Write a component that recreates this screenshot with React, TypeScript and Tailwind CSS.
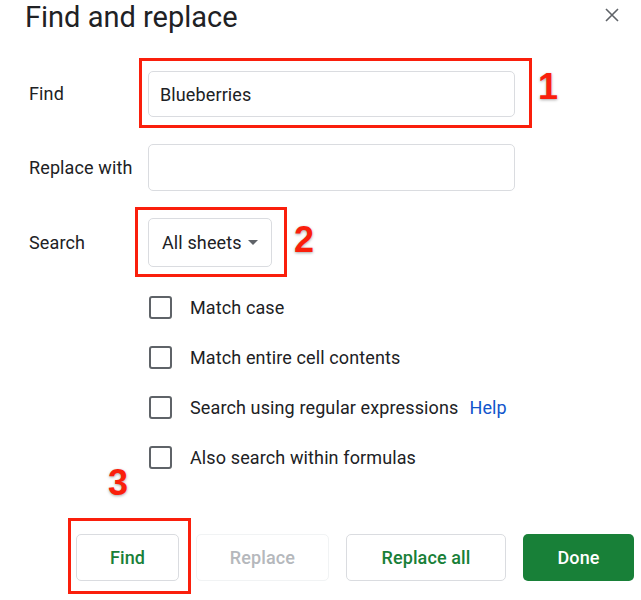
import React from 'react'

const OPTIONS = [
  'Match case',
  'Match entire cell contents',
  'Search using regular expressions',
  'Also search within formulas',
]

// red hand-drawn annotation box
function RedBox({ className }: { className: string }) {
  return <div className={`absolute border-[3px] border-[#fa1f0c] pointer-events-none ${className}`} />
}

function Num({ n, className }: { n: string; className: string }) {
  return (
    <span
      className={`absolute font-['Liberation_Sans',Arial,sans-serif] font-bold text-[36px] leading-none text-[#fa1f0c] [-webkit-text-stroke:5px_white] [paint-order:stroke_fill] [text-shadow:0_1px_3px_rgba(0,0,0,0.35)] ${className}`}
    >
      {n}
    </span>
  )
}

export default function App() {
  return (
    <div className="relative w-[641px] h-[600px] overflow-hidden bg-white font-['Roboto','Noto_Sans',sans-serif] text-[#202124] tracking-[0.12px]">
      {/* Header */}
      <div className="flex items-start justify-between h-[34px] pl-[25px] pr-[22px]">
        <h1 className="text-[29px] leading-[34px] font-normal tracking-normal">Find and replace</h1>
        <svg className="mt-[8px]" width="14" height="14" viewBox="0 0 14 14" fill="none">
          <path d="M1 1L13 13M13 1L1 13" stroke="#5f6368" strokeWidth="1.6" />
        </svg>
      </div>

      {/* Fields */}
      <div className="flex flex-col pl-[29px] mt-[37px]">
        <div className="flex items-center h-[46px]">
          <div className="w-[119px] text-[18px] leading-6">Find</div>
          <div className="w-[367px] h-[46px] flex items-center pl-[11px] border border-[#dadce0] rounded-[5px] text-[18px]">
            Blueberries
          </div>
        </div>
        <div className="flex items-center h-[47px] mt-[27px]">
          <div className="w-[119px] text-[18px] leading-6">Replace with</div>
          <div className="w-[367px] h-[47px] border border-[#dadce0] rounded-[5px]" />
        </div>
        <div className="flex items-center h-[49px] mt-[27px]">
          <div className="w-[119px] text-[18px] leading-6">Search</div>
          <div className="w-[124px] h-[49px] flex items-center justify-between pl-[13px] pr-[13px] border border-[#dadce0] rounded-[5px] text-[18px]">
            <span>All sheets</span>
            <svg width="10" height="5" viewBox="0 0 10 5">
              <path d="M0 0H10L5 5Z" fill="#5f6368" />
            </svg>
          </div>
        </div>

        {/* Options */}
        <div className="flex flex-col gap-[27px] mt-[29px] ml-[120px]">
          {OPTIONS.map((o, i) => (
            <div key={o} className="flex items-center h-[23px]">
              <div className="w-[23px] h-[23px] border-[2.5px] border-[#5f6368] rounded-[3px]" />
              <span className="ml-[18px] text-[18px] leading-6">{o}</span>
              {i === 2 && <span className="ml-[11px] text-[18px] leading-6 text-[#1155cc]">Help</span>}
            </div>
          ))}
        </div>
      </div>

      {/* Buttons */}
      <div className="flex gap-[17px] pl-[76px] mt-[65px]">
        <button className="w-[103px] h-[47px] border border-[#dadce0] rounded-[5px] text-[18px] font-medium text-[#188038]">
          Find
        </button>
        <button className="w-[133px] h-[47px] border border-[#f1f3f4] rounded-[5px] text-[18px] font-medium text-[#b5b8bc]">
          Replace
        </button>
        <button className="w-[160px] h-[47px] border border-[#dadce0] rounded-[5px] text-[18px] font-medium text-[#188038]">
          Replace all
        </button>
        <button className="w-[111px] h-[47px] rounded-[5px] bg-[#188038] text-[18px] font-medium text-white">
          Done
        </button>
      </div>

      {/* Annotations */}
      <RedBox className="left-[139px] top-[58px] w-[393px] h-[70px]" />
      <RedBox className="left-[135px] top-[207px] w-[152px] h-[70px]" />
      <RedBox className="left-[68px] top-[518px] w-[123px] h-[76px]" />
      <Num n="1" className="left-[538px] top-[69px]" />
      <Num n="2" className="left-[294px] top-[222px]" />
      <Num n="3" className="left-[108px] top-[465px]" />
    </div>
  )
}
